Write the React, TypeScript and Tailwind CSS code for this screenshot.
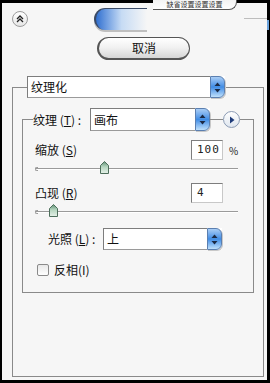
import React from 'react';

const cjk = { fontFamily: '"Noto Sans CJK SC", "Noto Sans", sans-serif' };

function Arrows() {
  return (
    <svg width="7" height="11" viewBox="0 0 7 11">
      <polygon points="3.5,0.5 6.5,4 0.5,4" fill="#1c2a44" />
      <polygon points="0.5,7 6.5,7 3.5,10.5" fill="#1c2a44" />
    </svg>
  );
}

function Select({ value, w, h }: { value: string; w: string; h: string }) {
  return (
    <div className={`flex ${w} ${h} bg-white`}>
      <div className="flex-1 flex items-center pl-[3px] border border-r-0 border-[#7d7d7d] border-b-[#9a9a9a] text-[12px] text-[#111]" style={cjk}>
        {value}
      </div>
      <div className="w-[15px] flex items-center justify-center rounded-r-[6px] border border-[#5b7fb0] bg-gradient-to-b from-[#a9cdf5] via-[#3f8ce4] to-[#bfe0fb] shadow-[1px_1px_0_#c8c8c8]">
        <Arrows />
      </div>
    </div>
  );
}

function Slider({ pos }: { pos: string }) {
  return (
    <div className="relative h-[14px] w-[203px]">
      <div className="absolute left-0 right-0 top-[7px] h-px bg-[#9a9a9a]" />
      <div className="absolute left-0 right-0 top-[8px] h-px bg-white" />
      <div className="absolute left-0 top-[6px] h-[4px] w-[3px] rounded-l-full border border-r-0 border-[#9a9a9a]" />
      <svg className={`absolute top-0 ${pos}`} width="9" height="13" viewBox="0 0 9 13">
        <defs>
          <linearGradient id="th" x1="0" y1="0" x2="0" y2="1">
            <stop offset="0" stopColor="#5f8f74" />
            <stop offset="0.45" stopColor="#b6d6c0" />
            <stop offset="1" stopColor="#e6f1e9" />
          </linearGradient>
        </defs>
        <polygon points="4.5,0.5 8.5,4.5 8.5,12.5 0.5,12.5 0.5,4.5" fill="url(#th)" stroke="#4d6e5b" strokeWidth="1" />
      </svg>
    </div>
  );
}

function NumBox({ v }: { v: string }) {
  return (
    <div className="w-[32px] h-[20px] bg-white border border-[#7d7d7d] border-r-[#c8c8c8] border-b-[#c8c8c8] flex items-center pl-[5px] text-[11px] text-[#222] tracking-[1px]" style={{ fontFamily: '"DejaVu Sans Mono", monospace' }}>
      {v}
    </div>
  );
}

export default function App() {
  return (
    <div className="relative w-[270px] h-[383px] bg-black pt-[3px] pl-[2px] pr-[3px] pb-[3px]" style={cjk}>
      {/* clipped button above */}
      <div className="absolute top-0 left-[153px] w-[84px] h-[10px] rounded-br-[8px] bg-gradient-to-b from-[#f3f3f3] to-white border-b border-r border-[#555] z-10 flex items-center justify-center">
        <div className="text-[7px] leading-[9px] text-[#333]">缺省设置设置设置</div>
      </div>
      <div className="absolute top-[18px] left-[244px] w-[23px] h-px bg-[#bdbdbd]" />
      <div className="absolute top-[20px] left-[267px] w-[2px] h-[10px] bg-[#6aa2dc]" />

      <div className="h-full bg-[#f6f6f6] flex flex-col">
        {/* top row */}
        <div className="flex items-start pt-[5px]">
          <div className="ml-[10px] mt-[3px] w-[16px] h-[16px] rounded-full border border-[#9c9c9c] bg-gradient-to-b from-white to-[#e6e6e6] flex items-center justify-center">
            <svg width="8" height="8" viewBox="0 0 8 8">
              <path d="M1 4 L4 1 L7 4 M1 7 L4 4 L7 7" fill="none" stroke="#222" strokeWidth="1.3" />
            </svg>
          </div>
          <div className="ml-[66px] w-[53px] h-[22px] rounded-l-full border-l-2 border-t border-[#3a4a66] bg-gradient-to-r from-[#2f6fcf] via-[#c6dbf4] to-[#f6f6f6] shadow-[0_2px_0_#bfbfbf]" />
        </div>

        {/* cancel */}
        <div className="ml-[95px] mt-[7px] w-[93px] h-[23px] rounded-full border border-[#555] border-l-2 border-b-2 bg-gradient-to-b from-white via-[#f0f0f0] to-[#d6d6d6] flex items-center justify-center text-[12px] text-[#111]">
          取消
        </div>

        {/* outer group */}
        <fieldset className="ml-[10px] mt-[16px] w-[252px] h-[301px] border border-[#8a8a8a] px-[9px]">
          <legend className="ml-[5px] mr-[1px]">
            <Select value="纹理化" w="w-[198px]" h="h-[22px]" />
          </legend>

          <fieldset className="mt-[10px] w-[232px] h-[185px] border border-[#8a8a8a]">
            <legend className="ml-[10px] flex items-center">
              <span className="text-[12px] text-[#111] w-[57px]">
                纹理 (<span className="underline">T</span>) :
              </span>
              <Select value="画布" w="w-[120px]" h="h-[23px]" />
              <div className="w-[13px] h-px bg-[#8a8a8a]" />
              <div className="w-[17px] h-[17px] rounded-full border border-[#8b9bb4] bg-gradient-to-b from-white to-[#dfe6ef] flex items-center justify-center">
                <svg width="6" height="8" viewBox="0 0 6 8">
                  <polygon points="1,0.5 5.5,4 1,7.5" fill="#1f3c7a" />
                </svg>
              </div>
            </legend>

            <div className="pl-[12px] pt-[9px] flex flex-col">
              <div className="flex items-center">
                <span className="flex-1 text-[12px] text-[#111]">
                  缩放 (<span className="underline">S</span>)
                </span>
                <NumBox v="100" />
                <span className="w-[30px] pl-[6px] text-[10px] text-[#222]">%</span>
              </div>
              <div className="mt-[1px]">
                <Slider pos="left-[65px]" />
              </div>

              <div className="flex items-center mt-[8px]">
                <span className="flex-1 text-[12px] text-[#111]">
                  凸现 (<span className="underline">R</span>)
                </span>
                <NumBox v="4" />
                <span className="w-[30px]" />
              </div>
              <div className="mt-[1px]">
                <Slider pos="left-[14px]" />
              </div>

              <div className="flex items-center mt-[10px] pl-[13px]">
                <span className="w-[55px] text-[12px] text-[#111]">
                  光照 (<span className="underline">L</span>) :
                </span>
                <Select value="上" w="w-[119px]" h="h-[22px]" />
              </div>

              <div className="flex items-center mt-[11px] pl-[2px]">
                <div className="w-[12px] h-[12px] rounded-[2px] border border-[#8a8a8a] bg-gradient-to-b from-[#e8e8e8] to-white" />
                <span className="ml-[5px] text-[12px] text-[#111]">反相(I)</span>
              </div>
            </div>
          </fieldset>
        </fieldset>
      </div>
    </div>
  );
}
